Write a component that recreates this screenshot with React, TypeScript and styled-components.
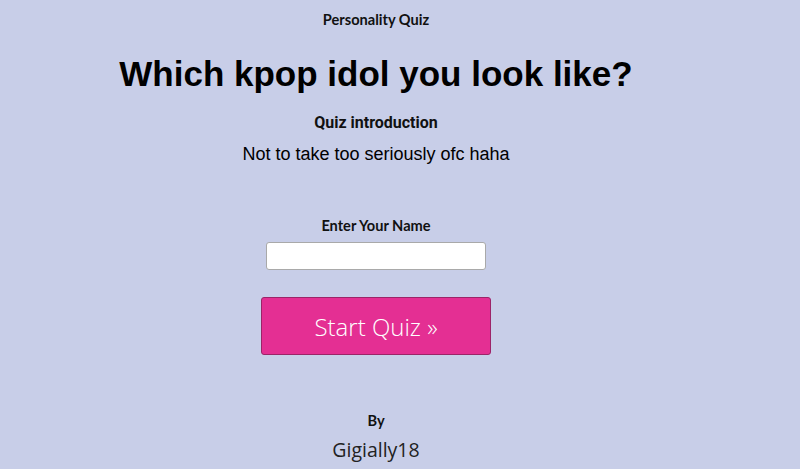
import React from "react";
import styled, { createGlobalStyle } from "styled-components";

const Global = createGlobalStyle`
  html, body { margin: 0; padding: 0; background: #c8cee8; }
  body { font-family: "Liberation Sans", Arial, sans-serif; color: #111; }
`;

const Page = styled.div`
  width: 752px;
  height: 469px;
  display: flex;
  flex-direction: column;
  align-items: center;
  text-align: center;
`;

const SmallBold = styled.div`
  font-family: "Lato", sans-serif;
  font-weight: 700;
  font-size: 14.6px;
  line-height: 17px;
`;

const Kicker = styled(SmallBold)`
  margin-top: 11px;
`;

const Title = styled.h1`
  margin: 26px 0 0;
  font-family: "Liberation Sans", Arial, sans-serif;
  font-weight: 700;
  font-size: 35px;
  line-height: 40px;
  color: #000;
`;

const SubHead = styled.div`
  margin-top: 20px;
  font-family: "Roboto", sans-serif;
  font-weight: 700;
  font-size: 16px;
  line-height: 18px;
`;

const Intro = styled.div`
  margin-top: 12px;
  font-family: "Liberation Sans", Arial, sans-serif;
  font-size: 18px;
  line-height: 21px;
  color: #000;
`;

const Label = styled(SmallBold).attrs({ as: "label" })`
  margin-top: 52px;
`;

const NameInput = styled.input`
  margin-top: 8px;
  width: 220px;
  height: 28px;
  box-sizing: border-box;
  background: #fff;
  border: 1px solid #a9a9a9;
  border-radius: 3px;
`;

const StartButton = styled.button`
  margin-top: 27px;
  width: 230px;
  height: 58px;
  box-sizing: border-box;
  background: #e42f93;
  border: 1px solid #9c2468;
  border-radius: 3px;
  color: #fff;
  font-family: "Open Sans", sans-serif;
  font-weight: 300;
  font-size: 24px;
`;

const ByLabel = styled(SmallBold)`
  margin-top: 57px;
`;

const Author = styled.div`
  margin-top: 9px;
  font-family: "Open Sans", sans-serif;
  font-size: 19.5px;
  line-height: 24px;
  color: #222;
`;

export default function App() {
  return (
    <>
      <Global />
      <Page>
        <Kicker>Personality Quiz</Kicker>
        <Title>Which kpop idol you look like?</Title>
        <SubHead>Quiz introduction</SubHead>
        <Intro>Not to take too seriously ofc haha</Intro>
        <Label htmlFor="name">Enter Your Name</Label>
        <NameInput id="name" type="text" />
        <StartButton>Start Quiz »</StartButton>
        <ByLabel>By</ByLabel>
        <Author>Gigially18</Author>
      </Page>
    </>
  );
}
